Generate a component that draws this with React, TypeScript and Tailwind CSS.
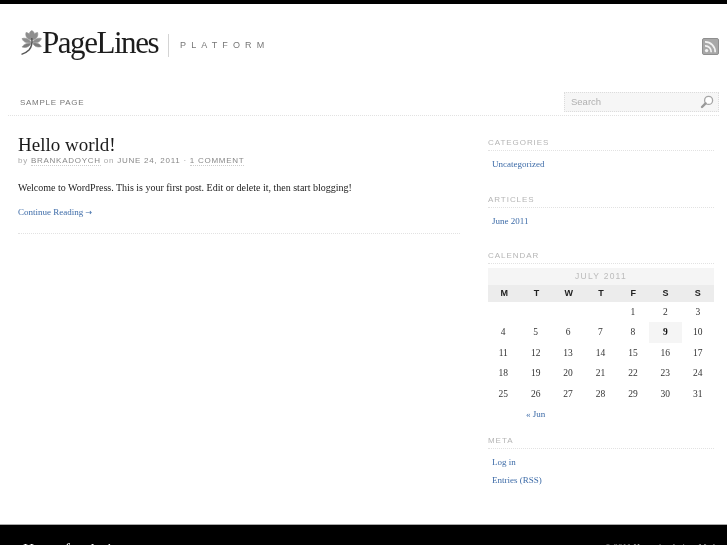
const sans = "font-['Liberation_Sans',Arial,sans-serif]";
const serif = "font-['Liberation_Serif','Times_New_Roman',serif]";

function WidgetTitle({ children }: { children: string }) {
  return (
    <h3 className={`${sans} text-[8px] leading-[11px] tracking-[0.95px] uppercase text-[#b5b5b5] pb-[2px] border-b border-dotted border-[#e2e2e2]`}>
      {children}
    </h3>
  );
}

function WidgetLink({ children }: { children: string }) {
  return <div className={`${serif} text-[9px] leading-[18.5px] text-[#3e6ca8] pl-[4px]`}>{children}</div>;
}

const rows: (number | null)[][] = [
  [null, null, null, null, 1, 2, 3],
  [4, 5, 6, 7, 8, 9, 10],
  [11, 12, 13, 14, 15, 16, 17],
  [18, 19, 20, 21, 22, 23, 24],
  [25, 26, 27, 28, 29, 30, 31],
];

function Calendar() {
  return (
    <div className="mt-[4px]">
      <div className={`${sans} h-[17px] bg-[#f5f5f5] text-center text-[8.5px] leading-[17px] tracking-[1.25px] text-[#bbb]`}>JULY 2011</div>
      <div className={`${sans} grid grid-cols-7 h-[17px] bg-[#ececec] text-center text-[9px] font-bold leading-[17px] text-[#222]`}>
        {["M", "T", "W", "T", "F", "S", "S"].map((d, i) => (
          <div key={i}>{d}</div>
        ))}
      </div>
      <div className={`${serif} -ml-px text-[9.5px] text-[#333]`}>
        {rows.map((r, i) => (
          <div key={i} className="grid grid-cols-7 h-[20.4px] text-center leading-[20px]">
            {r.map((n, j) => (
              <div key={j} className={n === 9 ? "bg-[#f5f5f5] font-bold text-[#111]" : ""}>
                {n}
              </div>
            ))}
          </div>
        ))}
        <div className="grid grid-cols-7 h-[20px] text-center text-[9px] leading-[20px] text-[#3e6ca8]">
          <div />
          <div>« Jun</div>
        </div>
      </div>
    </div>
  );
}

function Logo() {
  return (
    <div className="flex items-center">
      <svg width="21" height="26" viewBox="0 0 21 26" className="-mt-[5px] shrink-0">
        <g fill="#8e8e8e" stroke="#8e8e8e" strokeWidth="0.6">
          <path d="M10.8 0.5 C14 2 14.6 6 11 10 C7.4 6 7.6 2 10.8 0.5Z" />
          <path d="M5 2.5 C8 2.6 10 5.5 10.4 10 C6.4 9.4 4 6.4 5 2.5Z" />
          <path d="M16.6 2.5 C13.6 2.6 11.6 5.5 11.2 10 C15.2 9.4 17.6 6.4 16.6 2.5Z" />
          <path d="M1 8.6 C4.6 7.4 8.4 9.2 10.4 12.4 C6.2 13.6 2.4 12.4 1 8.6Z" />
          <path d="M20.4 8.6 C17 7.4 13.2 9.2 11.2 12.4 C15.2 13.6 19 12.4 20.4 8.6Z" />
          <path d="M1 17 C3.2 13.6 7.2 12.6 10 13.4 C8.4 16.6 5 18.4 1 17Z" fill="#7c7c7c" />
          <path d="M20.4 16.4 C18.2 13.4 15 12.6 11.8 13.4 C13.4 16.4 16.8 18 20.4 16.4Z" fill="#7c7c7c" />
        </g>
        <path d="M10.8 8 C11.4 13 10.8 17 8 20 C6 22 3 23.6 0.5 24.4" stroke="#555" strokeWidth="1.5" fill="none" />
      </svg>
      <span className={`${serif} -mt-[4px] text-[31px] leading-[34px] tracking-[-1.45px] text-[#1c1c1c]`}>PageLines</span>
      <span className="ml-[10px] h-[23px] w-px bg-[#d4d4d4]" />
      <span className={`${sans} ml-[11px] text-[9px] leading-[10px] tracking-[5.1px] text-[#777]`}>PLATFORM</span>
    </div>
  );
}

export default function App() {
  return (
    <div className="flex h-[545px] w-[727px] flex-col overflow-hidden bg-white [will-change:transform]">
      <div className="h-[4px] shrink-0 bg-black" />
      <header className="flex h-[82px] shrink-0 items-start justify-between pl-[21px] pr-[8px]">
        <div className="pt-[26px]">
          <Logo />
        </div>
        <svg width="17" height="17" viewBox="0 0 17 17" className="mt-[34px]">
          <rect x="0.5" y="0.5" width="16" height="16" rx="1.5" fill="#a8a8a8" stroke="#8f8f8f" />
          <circle cx="4.6" cy="12.6" r="1.7" fill="#f2f2f2" />
          <path d="M3 7.8 A6 6 0 0 1 9.2 14.2" stroke="#f2f2f2" strokeWidth="1.7" fill="none" />
          <path d="M3 3.9 A10 10 0 0 1 13.2 14.2" stroke="#f2f2f2" strokeWidth="1.7" fill="none" />
        </svg>
      </header>
      <nav className="ml-[8px] mr-[8px] flex h-[30px] shrink-0 items-start justify-between border-b border-dotted border-[#e2e2e2] pl-[12px]">
        <span className={`${sans} mt-[12px] text-[8px] leading-[10px] tracking-[0.72px] text-[#777]`}>SAMPLE PAGE</span>
        <div className="mt-[6px] flex h-[20px] w-[155px] items-center justify-between border border-dotted border-[#dcdcdc] bg-[#f6f6f6] pl-[6px] pr-[4px]">
          <span className={`${sans} text-[9.5px] text-[#b0b0b0]`}>Search</span>
          <svg width="14" height="14" viewBox="0 0 14 14">
            <circle cx="8.6" cy="5.4" r="4" stroke="#a5a5a5" strokeWidth="1.3" fill="#fff" />
            <path d="M5.6 8.4 L2 12" stroke="#999" strokeWidth="2.4" strokeLinecap="round" />
          </svg>
        </div>
      </nav>
      <main className="flex min-h-0 flex-1 pl-[18px] pr-[13px]">
        <section className="w-[442px] shrink-0">
          <div className="border-b border-dotted border-[#e2e2e2] pb-[11px] pt-[18px]">
            <h1 className={`${serif} text-[19px] leading-[21px] text-[#1a1a1a]`}>Hello world!</h1>
            <div className={`${sans} text-[8px] leading-[11px] tracking-[0.74px] text-[#aaa]`}>
              by <span className="border-b border-dotted border-[#ccc] text-[#888]">BRANKADOYCH</span> on{" "}
              <span className="text-[#888]">JUNE 24, 2011</span> ·{" "}
              <span className="border-b border-dotted border-[#ccc] text-[#888]">1 COMMENT</span>
            </div>
            <p className={`${serif} mt-[13px] text-[10px] leading-[18px] text-[#222]`}>
              Welcome to WordPress. This is your first post. Edit or delete it, then start blogging!
            </p>
            <div className={`${serif} mt-[6px] text-[9px] leading-[18px] text-[#3e6ca8]`}>
              Continue Reading <span className="font-['DejaVu_Sans',sans-serif] text-[8px]">→</span>
            </div>
          </div>
        </section>
        <aside className="ml-[28px] flex-1 pt-[21px]">
          <WidgetTitle>Categories</WidgetTitle>
          <div className="mt-[4px]">
            <WidgetLink>Uncategorized</WidgetLink>
          </div>
          <div className="mt-[20px]">
            <WidgetTitle>Articles</WidgetTitle>
          </div>
          <div className="mt-[4px]">
            <WidgetLink>June 2011</WidgetLink>
          </div>
          <div className="mt-[20px]">
            <WidgetTitle>Calendar</WidgetTitle>
          </div>
          <Calendar />
          <div className="mt-[11px]">
            <WidgetTitle>Meta</WidgetTitle>
          </div>
          <div className="mt-[4px]">
            <WidgetLink>Log in</WidgetLink>
            <WidgetLink>Entries (RSS)</WidgetLink>
          </div>
        </aside>
      </main>
      <footer className="flex h-[21px] shrink-0 items-start justify-between overflow-hidden border-t border-[#aaa] bg-black pl-[23px] pr-[8px] pt-[16px]">
        <span className={`${serif} text-[15.5px] leading-[16px] text-white`}>Home for design</span>
        <span className={`${serif} mt-[1px] text-[9px] leading-[10px] text-[#aaa]`}>© 2011 Home for design. Made</span>
      </footer>
    </div>
  );
}
